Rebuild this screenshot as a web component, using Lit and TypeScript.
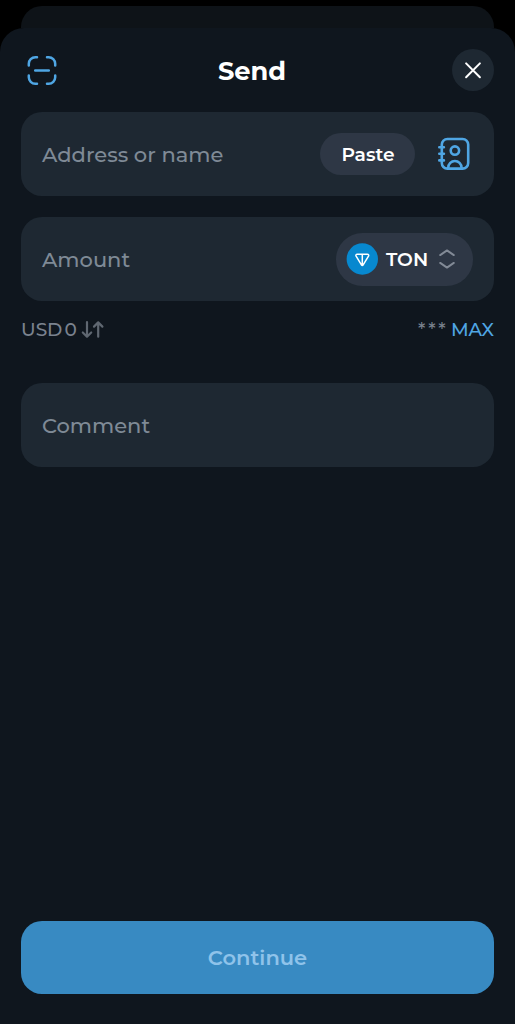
import { LitElement, html, css } from "lit";
import { customElement } from "lit/decorators.js";

@customElement("app-root")
export class AppRoot extends LitElement {
  static styles = css`
    :host {
      display: flex;
      flex-direction: column;
      height: 100vh;
      box-sizing: border-box;
      padding-top: 6px;
      background: #000;
      overflow: hidden;
      font-family: Montserrat, Inter, "Liberation Sans", sans-serif;
      font-weight: 500;
      color: #fff;
    }
    .back-sheet {
      flex: none;
      height: 22px;
      margin: 0 21px;
      border-radius: 21px 21px 0 0;
      background: #0e1318;
    }
    .sheet {
      flex: 1;
      display: flex;
      flex-direction: column;
      padding: 0 21px 30px;
      border-radius: 24px 24px 0 0;
      background: #0f161e;
    }
    svg { display: block; flex: none; fill: none; stroke-linecap: round; stroke-linejoin: round; }
    header {
      height: 84px;
      display: grid;
      grid-template-columns: 42px 1fr 42px;
      align-items: center;
      text-align: center;
    }
    h1 { margin: 2px 11px 0 0; font-size: 25.7px; line-height: 32px; font-weight: 700; }
    button { font: inherit; color: inherit; border: 0; padding: 0; background: none; display: flex; align-items: center; justify-content: center; }
    .round { width: 42px; height: 42px; border-radius: 50%; }
    .close { background: #1e2832; }
    .blue { color: #4fa6e4; }
    .field {
      height: 84px;
      flex: none;
      box-sizing: border-box;
      display: flex;
      align-items: center;
      padding: 0 21px;
      border-radius: 21px;
      background: #1e2832;
    }
    .field + .field { margin-top: 21px; }
    .label { flex: 1; font-size: 21px; line-height: 26px; color: #7f8a96; padding-top: 1px; }
    .paste { width: 95px; height: 42px; border-radius: 21px; background: #2e3745; font-size: 18.6px; font-weight: 600; margin-right: 21px; box-sizing: border-box; padding-left: 1px; }
    .token { width: 137px; height: 53px; border-radius: 27px; background: #2e3745; justify-content: flex-start; padding-left: 10px; box-sizing: border-box; }
    .ticker { width: 42px; margin: 0 10px 0 8px; font-size: 18.8px; font-weight: 600; text-align: left; white-space: nowrap; }
    .meta {
      display: flex;
      align-items: center;
      height: 24px;
      margin: 17px 0 41px;
      font-size: 18.5px;
      font-weight: 500;
      line-height: 24px;
      color: #7a828e;
    }
    .zero { margin: 0 4px 0 2px; }
    .stars { margin-left: auto; margin-right: 3px; letter-spacing: 2.3px; }
    .continue { height: 73px; margin-top: auto; border-radius: 21px; background: #388ac2; color: #8fc3ea; font-size: 21px; font-weight: 600; }
  `;

  render() {
    return html`
      <div class="back-sheet"></div>
      <main class="sheet">
        <header>
          <button class="round blue" aria-label="Scan">
            <svg width="32" height="32" viewBox="0 -0.5 32 32" stroke="currentColor" stroke-width="2.5">
              <path d="M2.8 11V9.3a6.5 6.5 0 0 1 6.5-6.5H11M21 2.8h1.7a6.5 6.5 0 0 1 6.5 6.5V11M29.2 21v1.7a6.5 6.5 0 0 1-6.5 6.5H21M11 29.2H9.3a6.5 6.5 0 0 1-6.5-6.5V21M9.2 16h13.6" />
            </svg>
          </button>
          <h1>Send</h1>
          <button class="round close" aria-label="Close">
            <svg width="18" height="18" viewBox="0 -0.3 18 18" stroke="currentColor" stroke-width="2">
              <path d="M2.1 2.1l13.8 13.8M15.9 2.1L2.1 15.9" />
            </svg>
          </button>
        </header>

        <section class="field">
          <span class="label">Address or name</span>
          <button class="paste">Paste</button>
          <button class="blue" aria-label="Contacts">
            <svg width="37" height="36" viewBox="0 0 37 36" stroke="currentColor" stroke-width="2.6">
              <rect x="5.8" y="3" width="26.4" height="29.6" rx="5.6" />
              <circle cx="18.9" cy="14.6" r="4.2" />
              <path d="M12.3 32.6v-1a6.6 6.6 0 0 1 13.2 0v1M3.3 11.2h4.6M3.3 17.8h4.6M3.3 24.4h4.6" />
            </svg>
          </button>
        </section>

        <section class="field">
          <span class="label">Amount</span>
          <button class="token">
            <svg width="32" height="32" viewBox="-0.3 0 32 32">
              <circle cx="16" cy="16" r="15.7" fill="#0788cf" />
              <path d="M10.9 11.2h10.2c1.1 0 1.6 1 1.1 1.9L16.7 22.2c-.3.5-1.1.5-1.4 0L9.8 13.1c-.5-.9 0-1.9 1.1-1.9zM16 11.4v10.8" stroke="#fff" stroke-width="1.5" />
            </svg>
            <span class="ticker">TON</span>
            <svg width="18" height="22" viewBox="0 0 18 22" stroke="#828a96" stroke-width="1.9">
              <path d="M2.2 7.1L9 2.4l6.8 4.7M2.2 14.9L9 19.6l6.8-4.7" />
            </svg>
          </button>
        </section>

        <div class="meta">
          <span class="usd">USD</span><span class="zero">0</span>
          <svg width="24" height="20" viewBox="0 0.5 24 20" stroke="#5f6771" stroke-width="2.2">
            <path d="M6 2.7v14.3M1.8 13L6 17.2l4.2-4.2M17.2 17.2V2.9M13 7.1l4.2-4.2 4.2 4.2" />
          </svg>
          <span class="stars">***</span><span class="max blue">MAX</span>
        </div>

        <section class="field">
          <span class="label">Comment</span>
        </section>

        <button class="continue">Continue</button>
      </main>
    `;
  }
}
